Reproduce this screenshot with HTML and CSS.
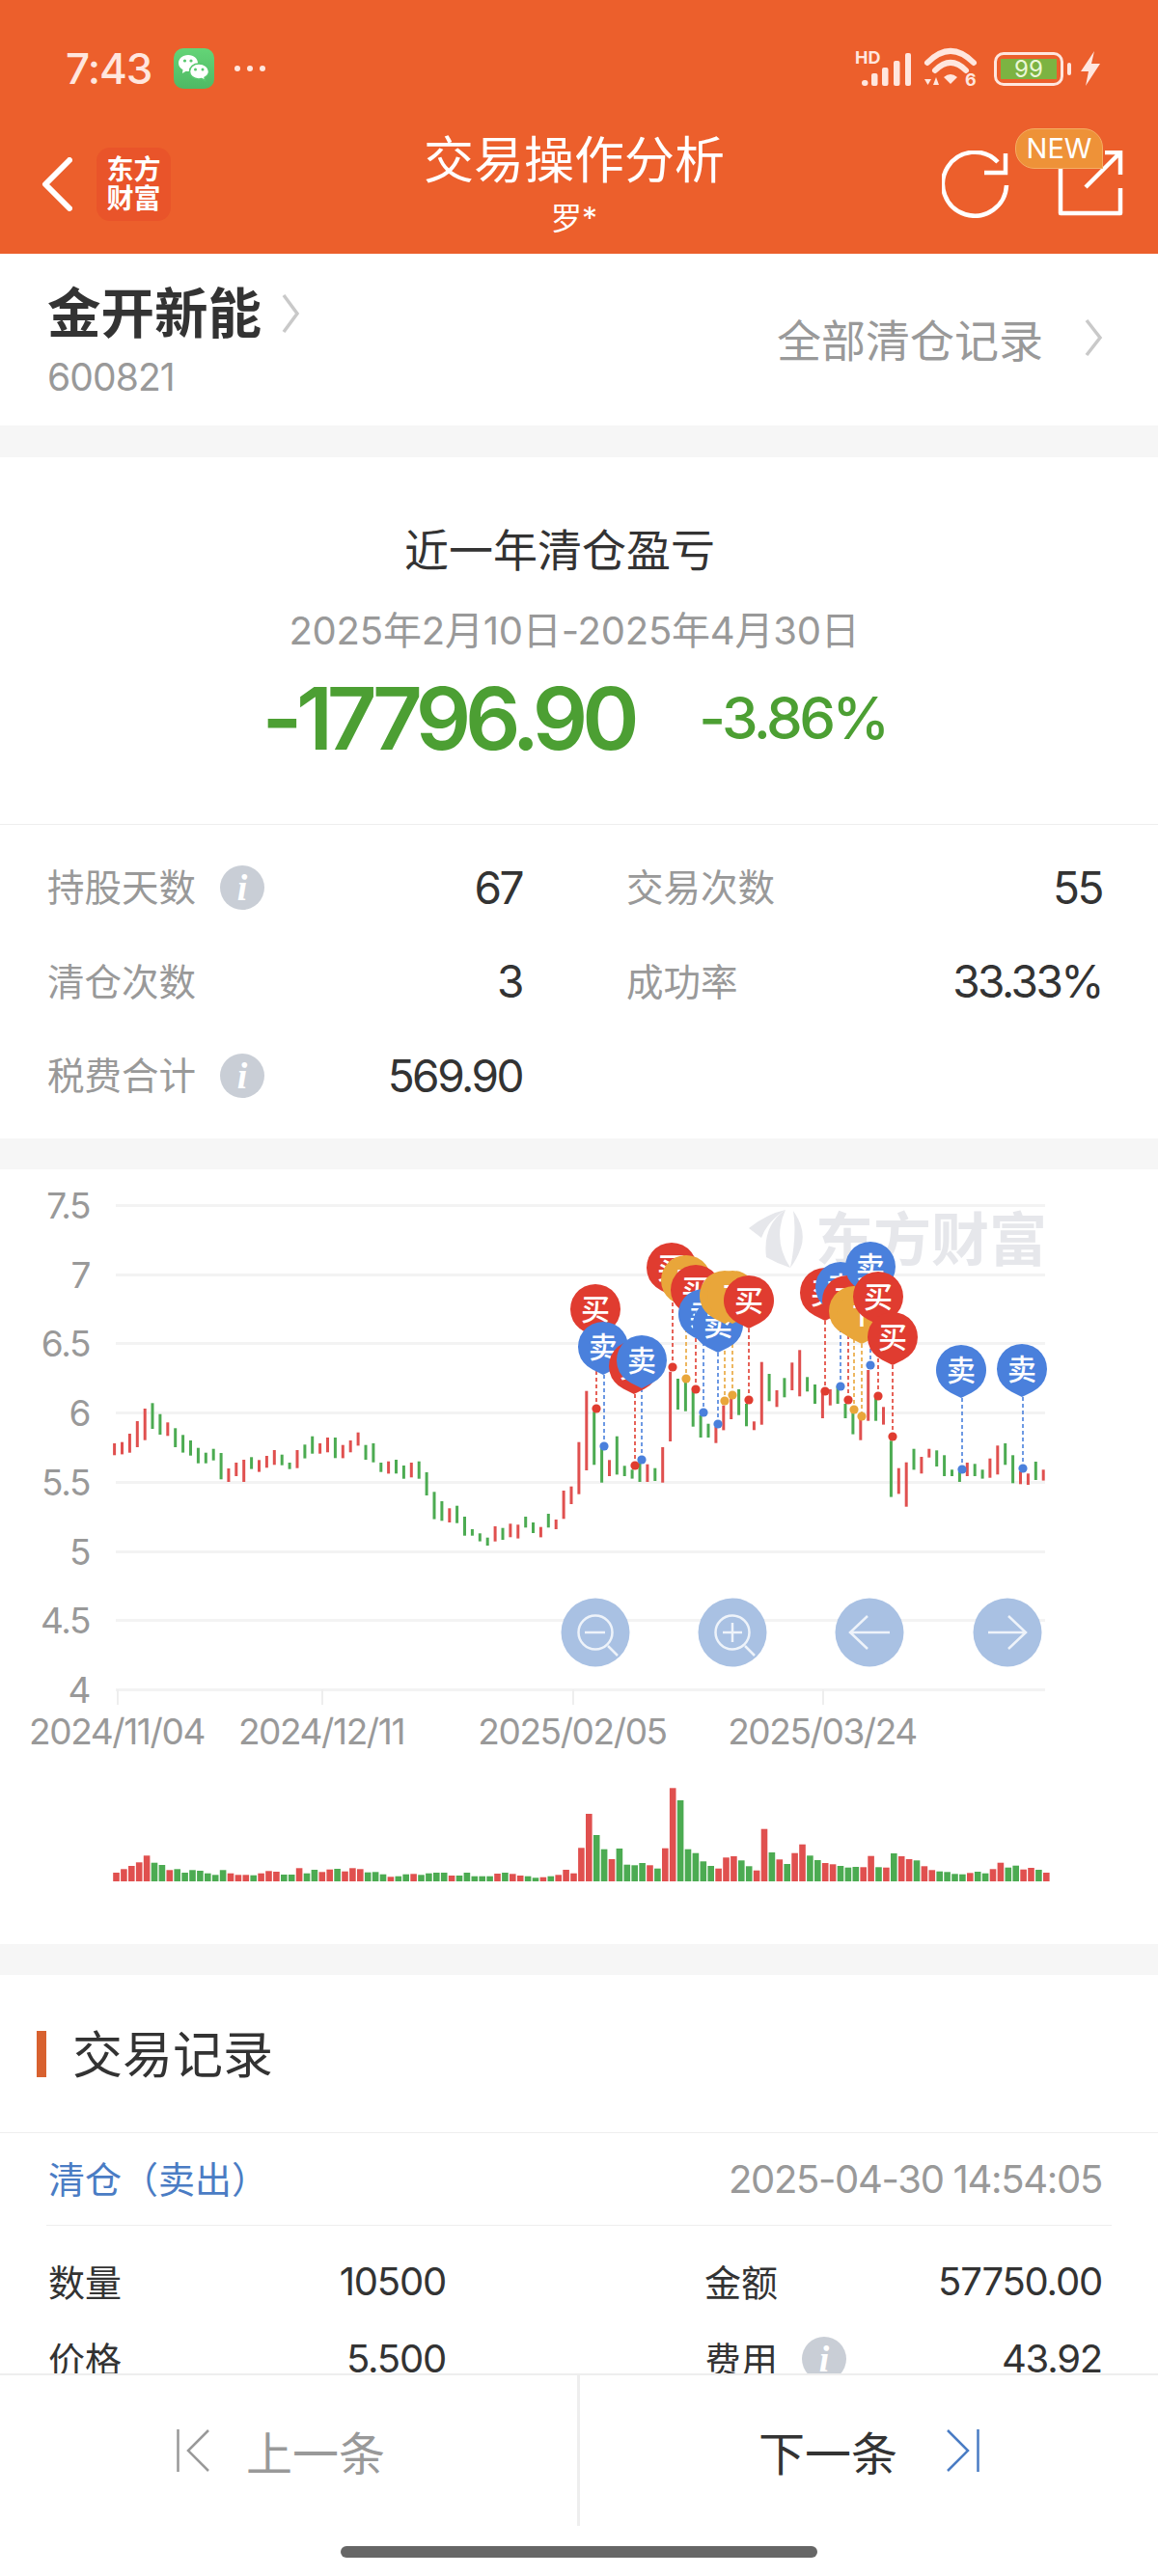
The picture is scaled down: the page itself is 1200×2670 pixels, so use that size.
FILE: index.html
```html
<!DOCTYPE html>
<html lang="zh-CN">
  <head>
    <meta charset="UTF-8" />
    <title>交易操作分析</title>
    <link rel="stylesheet" href="styles.css">
  </head>
  <body>
    <div class="page">
      <header class="topbar">
        <div class="status">
          <span class="clock">7:43</span>
          <span class="wechat">
            <svg width="34" height="30" viewBox="0 0 34 30">
              <path d="M11 1C5 1 1 5 1 9.5C1 12.5 3 15 5.5 16.3L5 20L8.8 17.7C9.8 18 11 18 12 18C19 18 21 13 21 9.5C21 5 17 1 11 1Z" fill="#fff"/>
              <path d="M22 10C16.5 10 12.5 13.5 12.5 18C12.5 22.5 16.5 26 22 26C23 26 24 25.8 25 25.5L28.5 27.5L28 24.3C31 22.8 32.5 20.5 32.5 18C32.5 13.5 28 10 22 10Z" fill="#fff" stroke="#58c86e" stroke-width="1.5"/>
              <circle cx="7.5" cy="7" r="1.6" fill="#58c86e"/>
              <circle cx="14" cy="7" r="1.6" fill="#58c86e"/>
              <circle cx="18.5" cy="16" r="1.5" fill="#58c86e"/>
              <circle cx="26" cy="16" r="1.5" fill="#58c86e"/>
            </svg>
          </span>
          <span class="more-dots"><i></i><i></i><i></i></span>
          <span class="status-right">
            <svg class="signal" width="58" height="36" viewBox="0 0 58 36">
              <text class="hd-text" x="0" y="13">HD</text>
              <rect x="7" y="30" width="6.5" height="6" rx="3"/>
              <rect x="17" y="23" width="6.5" height="13" rx="2"/>
              <rect x="28" y="17" width="6.5" height="19" rx="2"/>
              <rect x="40" y="10" width="6.5" height="26" rx="2"/>
              <rect x="52" y="2" width="6" height="34" rx="2"/>
            </svg>
            <svg class="wifi" width="56" height="42" viewBox="0 0 56 42">
              <path d="M3 15Q27 -9 51 15" fill="none" stroke="#ffe6de" stroke-width="6" stroke-linecap="round"/>
              <path d="M11 23Q27 7 43 23" fill="none" stroke="#ffe6de" stroke-width="6" stroke-linecap="round"/>
              <path d="M20 30Q27 24 34 30L27 37Z"/>
              <path d="M0 32H7L3.5 38Z"/>
              <path d="M9 38H15L12 30Z"/>
              <text class="wifi-six" x="42" y="39">6</text>
            </svg>
            <span class="battery"><span class="battery-level">99</span></span>
            <span class="battery-nub"></span>
            <svg class="bolt" width="20" height="36" viewBox="0 0 20 36">
              <path d="M14 0L0 21H8L5 36L20 13H11Z"/>
            </svg>
          </span>
        </div>

        <nav class="nav">
          <div class="nav-left">
            <svg width="32" height="56" viewBox="0 0 32 56">
              <path d="M29 3L4 28L29 53" fill="none" stroke="#fff" stroke-width="6" stroke-linecap="round" stroke-linejoin="round"/>
            </svg>
            <span class="logo">东方<br>财富</span>
          </div>
          <div class="nav-title">
            <h1>交易操作分析</h1>
            <p>罗*</p>
          </div>
          <div class="nav-actions">
            <svg width="70" height="70" viewBox="0 0 70 70">
              <path d="M67 36A33 33 0 1 1 58 12" fill="none" stroke="#fff" stroke-width="4.5"/>
              <path d="M44 23H66V3" fill="none" stroke="#fff" stroke-width="4.5"/>
            </svg>
            <svg width="68" height="68" viewBox="0 0 68 68">
              <path d="M3 17V65H65V39" fill="none" stroke="#fff" stroke-width="4.5" stroke-linejoin="round"/>
              <path d="M49 2H65V25M65 2L29 38" fill="none" stroke="#fff" stroke-width="4.5"/>
            </svg>
            <span class="new-badge">NEW</span>
          </div>
        </nav>
      </header>

      <section class="stock">
        <div class="stock-left">
          <div class="stock-name">
            金开新能
            <svg width="20" height="42" viewBox="0 0 20 42">
              <path d="M3 2L17 21L3 40" fill="none" stroke="#c9c9c9" stroke-width="3.5"/>
            </svg>
          </div>
          <div class="stock-code">600821</div>
        </div>
        <div class="stock-all">
          全部清仓记录
          <svg width="20" height="40" viewBox="0 0 20 40">
            <path d="M3 2L17 20L3 38" fill="none" stroke="#c9c9c9" stroke-width="3.5"/>
          </svg>
        </div>
      </section>

      <div class="gap"></div>

      <section class="summary">
        <h2>近一年清仓盈亏</h2>
        <p class="summary-date">2025年2月10日-2025年4月30日</p>
        <div class="summary-result">
          <span class="amount">-17796.90</span>
          <span class="percent">-3.86%</span>
        </div>
      </section>

      <section class="stats">
        <div class="stat"><span class="label">持股天数</span><span class="info">i</span><span class="value">67</span></div>
        <div class="stat"><span class="label">交易次数</span><span class="value">55</span></div>
        <div class="stat"><span class="label">清仓次数</span><span class="value">3</span></div>
        <div class="stat"><span class="label">成功率</span><span class="value">33.33%</span></div>
        <div class="stat"><span class="label">税费合计</span><span class="info">i</span><span class="value">569.90</span></div>
      </section>

      <div class="gap gap-thin"></div>

      <section class="chart">
        <svg id="chart" width="1200" height="803" viewBox="0 1212 1200 803"></svg>
      </section>

      <div class="gap gap-thin"></div>

      <section class="records">
        <div class="records-head">
          <span class="records-mark"></span>
          <h2>交易记录</h2>
        </div>
        <div class="trade-head">
          <span class="trade-type">清仓（卖出）</span>
          <span class="trade-time">2025-04-30 14:54:05</span>
        </div>
        <div class="trade-grid">
          <div class="trade-cell"><span class="trade-label">数量</span><span class="value">10500</span></div>
          <div class="trade-cell"><span class="trade-label">金额</span><span class="value">57750.00</span></div>
          <div class="trade-cell"><span class="trade-label">价格</span><span class="value">5.500</span></div>
          <div class="trade-cell"><span class="trade-label">费用</span><span class="info">i</span><span class="value">43.92</span></div>
        </div>
      </section>

      <footer class="bottom-bar">
        <div class="pager">
          <div class="pager-btn prev">
            <svg width="34" height="44" viewBox="0 0 34 44">
              <path d="M1.5 0V44M33 1L12 22L33 43" fill="none" stroke="#999" stroke-width="2.5"/>
            </svg>
            <span>上一条</span>
          </div>
          <div class="pager-btn next">
            <span>下一条</span>
            <svg width="34" height="44" viewBox="0 0 34 44">
              <path d="M1 1L22 22L1 43M32.5 0V44" fill="none" stroke="#4a7cc4" stroke-width="2.5"/>
            </svg>
          </div>
        </div>
        <div class="home-bar"></div>
      </footer>
    </div>

    <script src="chart.js"></script>
  </body>
</html>
```

FILE: styles.css
```css
* {
  box-sizing: border-box;
}

body {
  margin: 0;
  font-family: Inter, "Noto Sans CJK SC", sans-serif;
  background: #fff;
  color: #333;
}

h1,
h2,
p {
  margin: 0;
  font-weight: 400;
}

.page {
  position: relative;
  width: 1200px;
  height: 2670px;
  overflow: hidden;
  background: #fff;
}

.gap {
  height: 33px;
  background: #f6f6f6;
}

.gap-thin {
  height: 32px;
}

/* top bar */
.topbar {
  height: 263px;
  background: #ec5f2c;
  color: #fff;
}

.status {
  display: flex;
  align-items: center;
  height: 125px;
  padding: 17px 60px 0 68px;
  color: #ffe6de;
}

.clock {
  font-size: 44px;
  font-weight: 500;
  letter-spacing: -1px;
  width: 112px;
}

.wechat {
  display: flex;
  align-items: center;
  justify-content: center;
  width: 42px;
  height: 42px;
  border-radius: 10px;
  background: linear-gradient(#64d477, #4fb964);
}

.more-dots {
  display: flex;
  gap: 7px;
  margin-left: 21px;
}

.more-dots i {
  width: 6px;
  height: 6px;
  border-radius: 50%;
  background: #ffe6de;
}

.status-right {
  display: flex;
  align-items: center;
  margin-left: auto;
}

.status-right svg {
  fill: #ffe6de;
  overflow: visible;
}

.hd-text {
  font-size: 18px;
  font-weight: 700;
}

.wifi {
  margin-left: 14px;
}

.wifi-six {
  font-size: 18px;
  font-weight: 700;
}

.battery {
  display: flex;
  align-items: center;
  justify-content: center;
  width: 72px;
  height: 35px;
  margin-left: 16px;
  border: 3px solid #ffe6de;
  border-radius: 10px;
}

.battery-level {
  width: 58px;
  height: 21px;
  background: #7cb342;
  color: #eaf7d6;
  font-size: 24px;
  line-height: 21px;
  text-align: center;
}

.battery-nub {
  width: 4px;
  height: 13px;
  margin-left: 4px;
  border-radius: 2px;
  background: #ffe6de;
}

.bolt {
  margin-left: 10px;
}

.nav {
  display: grid;
  grid-template-columns: 250px 1fr 267px;
  height: 138px;
  padding: 0 36px 0 43px;
}

.nav-left {
  display: flex;
  align-items: center;
  align-self: start;
  gap: 25px;
  margin-top: 28px;
}

.logo {
  width: 77px;
  height: 76px;
  padding-top: 8px;
  border-radius: 14px;
  background: #e9542a;
  font-size: 28px;
  font-weight: 700;
  line-height: 30px;
  text-align: center;
}

.nav-title {
  padding-top: 12px;
  text-align: center;
}

.nav-title h1 {
  font-size: 52px;
  line-height: 60px;
}

.nav-title p {
  margin-top: 10px;
  font-size: 32px;
  line-height: 40px;
}

.nav-actions {
  position: relative;
  display: flex;
  align-self: start;
  justify-content: flex-end;
  gap: 50px;
  margin-top: 31px;
}

.new-badge {
  position: absolute;
  top: -23px;
  right: 21px;
  width: 91px;
  height: 42px;
  border: 1px solid #f5ad63;
  border-radius: 20px 20px 0 20px;
  background: #ee9238;
  font-size: 29px;
  line-height: 40px;
  text-align: center;
}

/* stock */
.stock {
  display: flex;
  justify-content: space-between;
  height: 178px;
  padding: 31px 57px 0 49px;
}

.stock-name {
  display: flex;
  align-items: center;
  gap: 20px;
  font-size: 55.5px;
  font-weight: 700;
  line-height: 62px;
}

.stock-code {
  margin-top: 12px;
  color: #999;
  font-size: 39px;
  line-height: 46px;
  letter-spacing: -0.9px;
}

.stock-all {
  display: flex;
  align-items: center;
  gap: 42px;
  height: 56px;
  margin-top: 28px;
  color: #999;
  font-size: 46px;
}

/* summary */
.summary {
  height: 381px;
  padding: 68px 10px 0 0;
  border-bottom: 1px solid #eee;
  text-align: center;
}

.summary h2 {
  padding-right: 30px;
  font-size: 46px;
  line-height: 56px;
}

.summary-date {
  margin-top: 32px;
  color: #999;
  font-size: 40px;
  line-height: 48px;
  letter-spacing: -0.2px;
}

.summary-result {
  display: flex;
  align-items: center;
  justify-content: center;
  gap: 68px;
  height: 100px;
  margin-top: 16px;
  color: #4c9f33;
}

.amount {
  font-size: 90px;
  font-weight: 600;
  letter-spacing: -6.3px;
}

.percent {
  font-size: 60px;
  font-weight: 500;
  letter-spacing: -3.5px;
}

/* stats */
.stats {
  display: grid;
  grid-template-columns: 492px 493px;
  grid-auto-rows: 97.5px;
  column-gap: 108px;
  height: 325px;
  padding: 16px 0 0 49px;
}

.stat,
.trade-cell {
  display: flex;
  align-items: center;
}

.label {
  padding-bottom: 5px;
  color: #999;
  font-size: 38.5px;
}

.value {
  margin-left: auto;
  color: #333;
  font-size: 46px;
  letter-spacing: -2.5px;
}

.info {
  width: 46px;
  height: 46px;
  margin-left: 25px;
  border-radius: 50%;
  background: #c9ced6;
  color: #fff;
  font-family: "Liberation Serif", serif;
  font-size: 38px;
  font-style: italic;
  font-weight: 700;
  line-height: 46px;
  text-align: center;
}

/* chart */
.chart {
  height: 803px;
}

.chart svg {
  display: block;
}

.axis-text {
  fill: #999;
  font-size: 37px;
  letter-spacing: -1.4px;
}

.watermark {
  fill: #e6e7eb;
  font-size: 60px;
  font-weight: 700;
}

.balloon-text {
  fill: #fff;
  font-size: 30px;
  font-weight: 500;
}

/* records */
.records-head {
  display: flex;
  align-items: center;
  height: 164px;
  padding-left: 38px;
  border-bottom: 1px solid #eee;
}

.records-mark {
  width: 10px;
  height: 48px;
  background: #d8612f;
}

.records-head h2 {
  margin-left: 27px;
  padding-bottom: 5px;
  font-size: 52px;
}

.trade-head {
  display: flex;
  align-items: center;
  justify-content: space-between;
  height: 96px;
  margin: 0 48px;
  padding: 0 10px 0 2px;
  border-bottom: 1px solid #eee;
}

.trade-type {
  padding-bottom: 4px;
  color: #4a7cc4;
  font-size: 38px;
}

.trade-time {
  color: #999;
  font-size: 40px;
  letter-spacing: -1.3px;
}

.trade-grid {
  display: grid;
  grid-template-columns: 412px 412px;
  grid-auto-rows: 80px;
  column-gap: 268px;
  padding: 18px 0 0 50px;
  font-size: 38px;
}

.trade-label {
  padding-bottom: 4px;
}

.trade-grid .value {
  padding-bottom: 2px;
  font-size: 40px;
  letter-spacing: -1.2px;
}

/* bottom bar */
.bottom-bar {
  position: absolute;
  right: 0;
  bottom: 0;
  left: 0;
  height: 210px;
  border-top: 2px solid #eee;
  background: #fff;
}

.pager {
  display: flex;
  height: 156px;
}

.pager-btn {
  display: flex;
  align-items: center;
  justify-content: center;
  font-size: 48px;
}

.prev {
  gap: 38px;
  width: 601px;
  padding-right: 16px;
  border-right: 3px solid #eee;
  color: #999;
}

.next {
  gap: 51px;
  width: 599px;
}

.home-bar {
  width: 494px;
  height: 12px;
  margin: 21px auto 0;
  border-radius: 6px;
  background: #666;
}
```

FILE: chart.js
```js
// candles: [1 up / 0 down, top, bottom], 3 units per px measured from y=1200
const candles = [
  [1,888,925],[1,884,922],[1,858,917],[1,819,900],[1,780,878],[0,763,843],[0,797,861],[1,823,865],
  [0,841,900],[0,862,917],[0,879,926],[0,902,950],[0,917,950],[0,905,941],[0,918,1000],[1,966,1008],
  [1,948,990],[1,939,1008],[0,931,968],[1,940,977],[1,927,964],[1,909,955],[0,923,956],[0,948,968],
  [1,909,965],[0,892,935],[0,866,920],[1,888,920],[1,870,916],[0,870,934],[1,893,934],[1,879,916],
  [1,854,895],[0,893,939],[0,888,947],[0,948,977],[1,944,982],[0,939,982],[0,957,998],[1,948,994],
  [0,944,998],[0,978,1050],[0,1039,1124],[0,1068,1129],[1,1090,1134],[0,1082,1136],[0,1116,1175],[0,1155,1175],
  [0,1168,1193],[0,1181,1206],[1,1146,1193],[0,1151,1188],[1,1138,1180],[1,1141,1184],[0,1116,1150],[0,1134,1167],
  [1,1148,1180],[0,1107,1150],[1,1125,1155],[1,1035,1123],[1,1022,1077],[1,884,1046],[1,725,972],[0,790,955],
  [0,890,1010],[1,940,990],[0,866,985],[0,958,990],[0,970,998],[0,930,1008],[1,953,1008],[0,965,1005],
  [1,900,1010],[1,665,882],[0,687,783],[0,695,788],[0,725,836],[0,800,870],[0,827,870],[1,837,887],
  [1,770,847],[1,745,813],[0,720,800],[0,765,835],[1,820,847],[1,635,830],[0,672,757],[1,723,775],
  [0,685,745],[1,637,723],[1,598,742],[0,682,727],[0,705,765],[1,730,810],[1,720,770],[0,710,765],
  [0,765,810],[0,790,860],[1,810,878],[1,660,818],[0,740,818],[1,775,830],[0,880,1055],[1,965,1045],
  [1,947,1085],[0,905,970],[1,930,982],[1,905,932],[0,910,960],[0,925,990],[0,970,990],[0,975,1008],
  [1,948,990],[0,952,990],[0,970,998],[1,935,995],[1,895,985],[0,888,955],[0,925,1012],[1,975,1015],
  [1,982,1017],[0,945,1002],[1,970,1004]
];

// volume bar tops, 3 units per px measured from y=1600, baseline at 1050
const volumes = [
  1023,1012,1002,991,970,992,999,1015,1012,1023,1015,1017,1025,1030,1015,1025,
  1030,1030,1031,1025,1018,1020,1029,1029,1009,1025,1014,1021,1013,1011,1019,1009,
  1012,1022,1021,1028,1036,1034,1028,1027,1030,1025,1023,1023,1032,1032,1023,1034,
  1034,1034,1026,1023,1027,1032,1034,1039,1037,1034,1030,1014,1025,946,840,906,
  950,981,948,998,1000,993,1000,1010,947,760,798,950,962,988,1002,1010,
  976,972,985,1003,1016,887,960,982,996,962,935,970,984,993,997,1002,
  1007,1005,1006,971,1006,1007,963,972,981,985,1003,1015,1019,1021,1027,1028,
  1024,1020,1025,1012,992,1007,1001,1013,1008,1014,1023
];

// trades: [kind, balloon x, balloon centre y, dot x, dot y]
const trades = [
  ["buy",617,1357,618,1460],["sell",625,1396,626,1499],["buy",657,1416,658,1519],["sell",665,1410,665,1513],
  ["buy",696,1314,697,1417],["t",711,1327,711,1429],["buy",721,1337,721,1440],["sell",729,1362,729,1464],
  ["sell",744,1373,744,1476],["t",751,1343,751,1452],["t",759,1343,759,1446],["buy",776,1348,776,1451],
  ["buy",855,1340,855,1442],["sell",871,1334,871,1437],["buy",878,1348,879,1451],["t",885,1359,885,1461],
  ["t",893,1364,893,1468],["sell",902,1313,902,1415],["buy",910,1344,910,1447],["buy",925,1386,925,1489],
  ["sell",996,1420,997,1523],["sell",1059,1419,1060,1522]
];

const kinds = {
  buy: { color: "#e03c30", label: "买" },
  sell: { color: "#4a80dc", label: "卖" },
  t: { color: "#e9a63a", label: "T" }
};

const RED = "#e0504f";
const GREEN = "#4cab52";
const GRID = "#f3f3f3";

let out = "";

// grid and price labels
["7.5", "7", "6.5", "6", "5.5", "5", "4.5", "4"].forEach((label, i) => {
  const y = Math.round(1249 + i * 71.7);
  out += `<rect x="120" y="${y - 1}" width="963" height="3" fill="${GRID}"/>`;
  out += `<text class="axis-text" x="93" y="${y + 14}" text-anchor="end">${label}</text>`;
});

// date ticks
[[122, "2024/11/04"], [334, "2024/12/11"], [594, "2025/02/05"], [853, "2025/03/24"]].forEach(([x, label]) => {
  out += `<rect x="${x - 1}" y="1751" width="2" height="16" fill="#eee"/>`;
  out += `<text class="axis-text" x="${x - 1}" y="1808" text-anchor="middle">${label}</text>`;
});

// watermark
out += `<g fill="#e6e7eb">
  <path d="M776 1273Q795 1258 814 1254Q795 1266 789 1283Z"/>
  <path d="M794 1303Q790 1270 814 1254Q800 1285 819 1314Q806 1310 794 1303Z"/>
  <path d="M822 1255Q836 1275 830 1293Q826 1305 819 1314Q826 1280 822 1255Z"/>
</g>`;
out += `<text class="watermark" x="845" y="1307">东方财富</text>`;

// candles
candles.forEach(([up, top, bottom], i) => {
  const x = 118.6 + i * 7.89;
  const y = 1200 + top / 3;
  const h = (bottom - top) / 3;
  out += `<rect x="${(x - 1.5).toFixed(1)}" y="${y.toFixed(1)}" width="3" height="${h.toFixed(1)}" fill="${up ? RED : GREEN}"/>`;
});

// volume
volumes.forEach((top, i) => {
  const x = 117.2 + i * 7.9;
  const y = 1600 + top / 3;
  const h = (1050 - top) / 3;
  out += `<rect x="${x.toFixed(1)}" y="${y.toFixed(1)}" width="6.6" height="${h.toFixed(1)}" fill="${candles[i][0] ? RED : GREEN}"/>`;
});

// dashed lines and dots go under the balloons
trades.forEach(([kind, x, y, dotX, dotY]) => {
  const color = kinds[kind].color;
  out += `<path d="M${dotX} ${y + 29}V${dotY}" stroke="${color}" stroke-width="1.6" stroke-dasharray="4 3"/>`;
  out += `<circle cx="${dotX}" cy="${dotY}" r="4.6" fill="${color}"/>`;
});

trades.forEach(([kind, x, y]) => {
  const { color, label } = kinds[kind];
  out += `<path d="M${x} ${y + 29}L${x - 11} ${y + 23.5}A26 26 0 1 1 ${x + 11} ${y + 23.5}Z" fill="${color}"/>`;
  out += `<text class="balloon-text" x="${x}" y="${y + 11}" text-anchor="middle">${label}</text>`;
});

// zoom and move buttons
const icons = [
  "M606 1692H627M630 1706L640 1716",
  "M749 1692H769M759 1682V1702M772 1706L782 1716",
  "M881 1692H922M899 1675L881 1692L899 1709",
  "M1024 1692H1063M1045 1675L1063 1692L1045 1709"
];
[617, 759, 901, 1044].forEach((x, i) => {
  out += `<circle cx="${x}" cy="1692" r="35.5" fill="#a9c1e3"/>`;
  if (i < 2) {
    out += `<circle cx="${x}" cy="1692" r="17.5" fill="none" stroke="#eef3fa" stroke-width="2.5"/>`;
  }
  out += `<path d="${icons[i]}" fill="none" stroke="#eef3fa" stroke-width="2.5"/>`;
});

document.getElementById("chart").innerHTML = out;
```
